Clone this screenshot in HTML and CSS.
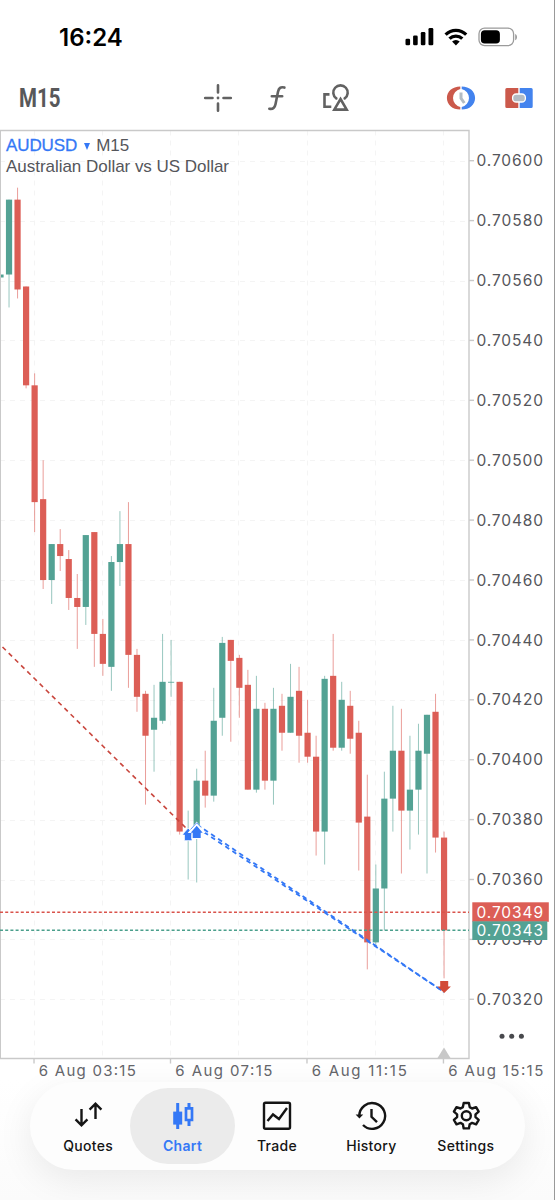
FILE: index.html
```html
<!DOCTYPE html>
<html lang="en">
<head>
    <meta charset="UTF-8">
    <title>AUDUSD M15</title>
    <link rel="stylesheet" href="styles.css">
</head>
<body>
    <div class="phone">
        <div class="status-bar">
            <span class="time">16:24</span>
            <svg class="status-icons" width="114" height="22" viewBox="404 26 114 22">
                <rect x="405.5" y="38.7" width="4.6" height="6.6" rx="1.3"/>
                <rect x="413.1" y="35.5" width="4.6" height="9.8" rx="1.3"/>
                <rect x="420.8" y="31.9" width="4.6" height="13.4" rx="1.3"/>
                <rect x="428.5" y="28" width="4.8" height="17.3" rx="1.3"/>
                <path d="M445.6 34.6a14.6 14.6 0 0 1 20.6 0M449.5 38.7a9.1 9.1 0 0 1 12.8 0" fill="none" stroke="#000" stroke-width="3.2"/>
                <path d="M455.9 45.4l-3.8-3.8a5.4 5.4 0 0 1 7.6 0z"/>
                <rect x="479" y="28.1" width="34.6" height="17.6" rx="5.6" fill="none" stroke="#9b9b9b" stroke-width="1.3"/>
                <rect x="480.9" y="30.2" width="19" height="13.4" rx="3.8"/>
                <path d="M515.2 34c2.4 1 2.4 5.2 0 6.2z" fill="#9b9b9b"/>
            </svg>
        </div>

        <div class="toolbar">
            <span class="timeframe">M15</span>
            <div class="tools">
                <svg width="30" height="30" viewBox="0 0 30 30">
                    <path d="M15 2.200v7.300M15 20.500v7.300M2.200 15h7.300M20.500 15h7.300" class="tool-line"/>
                    <circle cx="15" cy="15" r="1.4" fill="#626262"/>
                </svg>
                <svg width="30" height="30" viewBox="0 0 30 30">
                    <path d="M22.400 4.600c-3.800-1.200-5.600.5-6.400 4.200l-2.500 12.400c-.8 3.800-2.400 5.300-6.200 4.600M9.800 13.200h10.400" class="tool-line"/>
                </svg>
                <svg width="30" height="30" viewBox="0 0 30 30">
                    <path d="M8.500 11.400H3.500v12.300h6.800" class="tool-line square"/>
                    <path d="M15.300 15.400a7.200 7.200 0 1 1 8.400 0" class="tool-line"/>
                    <path d="M19.500 16l6.200 10.600H13.300z" class="tool-line square"/>
                </svg>
            </div>
            <div class="modes">
                <svg width="30" height="26" viewBox="0 0 30 26">
                    <path d="M14.300 1.400C6.300 1.400.9 6.500.9 13s5.400 11.600 13.400 11.600v-2.600a9.200 9.200 0 0 1 0-18z" fill="#cb594b"/>
                    <path d="M15.700 1.400C23.700 1.400 29.100 6.500 29.100 13s-5.400 11.600-13.400 11.600v-2.600a9.200 9.200 0 0 0 0-18z" fill="#4383ee"/>
                    <path d="M15 7.500v5.800l3.300 4.700" fill="none" stroke="#b3bcc4" stroke-width="3"/>
                </svg>
                <svg width="30" height="26" viewBox="0 0 30 26">
                    <path d="M2.800 3h11.500v20H2.800a1.500 1.500 0 0 1-1.500-1.500v-17A1.500 1.500 0 0 1 2.800 3z" fill="#cb594b"/>
                    <path d="M15.700 3h11.500a1.500 1.500 0 0 1 1.500 1.500v17a1.500 1.500 0 0 1-1.500 1.500H15.700z" fill="#4383ee"/>
                    <rect x="8.600" y="9" width="12.800" height="8" rx="3.600" fill="#b3bcc4" stroke="#fff" stroke-width="1.300"/>
                </svg>
            </div>
        </div>

        <div class="chart-area">
            <svg id="chart" width="554" height="960" viewBox="0 126 554 960"></svg>
            <div class="chart-title">
                <div><span class="symbol">AUDUSD</span><span class="arrow"></span><span>M15</span></div>
                <div class="description">Australian Dollar vs US Dollar</div>
            </div>
        </div>

        <nav class="tabs">
            <a class="tab">
                <svg width="32" height="32" viewBox="0 0 32 32">
                    <path d="M9.500 9v16M3.600 19.400l5.900 6 5.900-6M23.500 19V3.600M17.600 9.600l5.900-6 5.900 6"/>
                </svg>
                <span>Quotes</span>
            </a>
            <a class="tab active">
                <svg width="32" height="32" viewBox="0 0 32 32">
                    <path d="M10.700 3v26M22 3v5M22 20v6" stroke-width="3"/>
                    <path d="M6.200 11.600h9v13h-9z" fill="currentColor" stroke="none"/>
                    <path d="M19 8.400h6v11.600h-6z" stroke-width="2.700"/>
                </svg>
                <span>Chart</span>
            </a>
            <a class="tab">
                <svg width="32" height="32" viewBox="0 0 32 32">
                    <rect x="3" y="2.800" width="26" height="26" rx="1.500"/>
                    <path d="M6.500 21l5.500-6.500 6 4.500 8-11"/>
                </svg>
                <span>Trade</span>
            </a>
            <a class="tab">
                <svg width="32" height="32" viewBox="0 0 32 32">
                    <path d="M4.300 16A12.900 12.900 0 1 1 8 25M16.500 9v7.800l5.500 5.400"/>
                    <path d="M.6 14.400h7.600l-3.800 4.200z" fill="currentColor" stroke="none"/>
                </svg>
                <span>History</span>
            </a>
            <a class="tab">
                <svg width="32" height="32" viewBox="0 0 32 32">
                    <path d="M13.700 3h5.200l.8 4.100 2.400 1.400 4-1.400 2.600 4.500-3.200 2.700v2.800l3.200 2.700-2.600 4.500-4-1.400-2.400 1.400-.8 4.100h-5.200l-.8-4.100-2.400-1.400-4 1.400-2.600-4.500 3.200-2.700v-2.800l-3.200-2.700 2.600-4.500 4 1.400 2.400-1.400z" stroke-linejoin="round"/>
                    <circle cx="16.300" cy="15.700" r="4.500"/>
                </svg>
                <span>Settings</span>
            </a>
        </nav>
    </div>

    <script src="chart.js"></script>
</body>
</html>
```

FILE: styles.css
```css
* {
    box-sizing: border-box;
}

body {
    margin: 0;
    background-color: #fff;
    font-family: Inter, sans-serif;
}

.phone {
    width: 555px;
    height: 1200px;
    overflow: hidden;
    border-right: 1px solid #999;
    background: linear-gradient(#fff 1080px, #fbfbfb);
}

/* Status bar */
.status-bar {
    display: flex;
    justify-content: space-between;
    height: 71px;
    padding: 26px 36px 0 59px;
}

.time {
    font-size: 24px;
    font-weight: 600;
    line-height: 24px;
    letter-spacing: 0;
}

/* Toolbar */
.toolbar {
    display: flex;
    align-items: center;
    height: 55px;
    padding: 0 0 1px 19px;
}

.timeframe {
    width: 184px;
    font-family: Roboto, sans-serif;
    font-size: 25px;
    font-weight: 700;
    color: #58585a;
    transform: scaleX(0.82);
    transform-origin: left;
}

.tools {
    display: flex;
    gap: 29px;
}

.tool-line {
    fill: none;
    stroke: #626262;
    stroke-width: 2.6;
    stroke-linecap: round;
}

.tool-line.square {
    stroke-linecap: butt;
}

.modes {
    display: flex;
    gap: 28px;
    margin-left: 95px;
}

/* Chart */
.chart-area {
    position: relative;
    height: 956px;
}

#chart {
    display: block;
}

.chart-title {
    position: absolute;
    top: 9px;
    left: 6px;
    font-family: "Liberation Sans", Arial, sans-serif;
    font-size: 17px;
    line-height: 21px;
    color: #55565b;
}

.symbol {
    letter-spacing: -0.1px;
    color: #3478f6;
    -webkit-text-stroke: 0.3px #3478f6;
}

.arrow {
    display: inline-block;
    margin: 0 6px 1px 7px;
    border-top: 7px solid #3478f6;
    border-left: 3.5px solid transparent;
    border-right: 3.5px solid transparent;
}

.description {
    letter-spacing: -0.03px;
}

.grid {
    stroke: #f4f4f4;
    stroke-dasharray: 5 5;
}

.frame {
    fill: none;
    stroke: #c9c9c9;
    stroke-width: 1.4;
}

.up {
    fill: #53a294;
}

.down {
    fill: #dc5e56;
}

.wick {
    opacity: 0.6;
}

.axis-label {
    font-size: 15.5px;
    fill: #55565b;
}

.axis-label.light {
    fill: #fff;
}

.time-label {
    font-size: 15px;
    fill: #65666b;
}

/* Bottom tabs */
.tabs {
    position: relative;
    display: grid;
    grid-template-columns: repeat(5, 1fr);
    width: 495px;
    height: 88px;
    margin-left: 30px;
    padding: 6px 12px 6px 11px;
    border-radius: 44px;
    background-color: #fdfdfd;
    box-shadow: 0 10px 36px rgba(0, 0, 0, 0.08);
}

.tab {
    display: flex;
    flex-direction: column;
    align-items: center;
    padding-top: 12px;
    font-size: 14px;
    font-weight: 500;
    line-height: 18px;
    letter-spacing: 0.3px;
    color: #151515;
}

.tab svg {
    margin-bottom: 5px;
    fill: none;
    stroke: currentColor;
    stroke-width: 2.4;
}

.tab.active {
    margin: 0 -5px;
    border-radius: 38px;
    background-color: #ebebeb;
    font-weight: 600;
    color: #3478f6;
}
```

FILE: chart.js
```js
// [open, high, low, close] in points above 0.70000
const candles = [
    [561, 562, 561, 562],
    [562, 587, 551, 587], [587, 591, 554, 557], [558, 558, 524, 525], [525, 529, 476, 486],
    [487, 500, 457, 460], [460, 472, 452, 472], [472, 477, 463, 468], [467, 470, 450, 454],
    [454, 462, 437, 451], [451, 475, 445, 475], [476, 476, 431, 442], [442, 447, 428, 432],
    [431, 468, 423, 466], [466, 483, 458, 472], [472, 486, 424, 435], [435, 437, 416, 421],
    [422, 423, 385, 408], [410, 425, 396, 414], [413, 442, 412, 426], [426, 440, 421, 426],
    [426, 426, 375, 376], [376, 383, 360, 376], [377, 397, 359, 393], [393, 403, 384, 388],
    [388, 424, 386, 413], [414, 441, 408, 439], [440, 440, 406, 433], [434, 435, 414, 424],
    [425, 430, 390, 390], [390, 428, 389, 417], [417, 419, 390, 393], [393, 424, 385, 417],
    [418, 422, 403, 409], [409, 432, 409, 421], [423, 431, 399, 408], [409, 420, 399, 401],
    [401, 408, 368, 376], [376, 428, 365, 427], [428, 442, 403, 404], [404, 426, 403, 420],
    [418, 423, 402, 407], [409, 413, 363, 379], [381, 395, 330, 339], [339, 365, 338, 357],
    [357, 396, 343, 387], [387, 418, 376, 403], [403, 417, 362, 383], [383, 408, 370, 390],
    [390, 412, 375, 403], [402, 415, 362, 415], [416, 422, 369, 374], [374, 376, 327, 343]
];

const RIGHT = 469;
const TOP = 130.5;
const BOTTOM = 1058.5;
const STEP = 8.53;

const xOf = i => 0.5 + i * STEP;
const yOf = points => 160.7 + (600 - points) * 2.995;
const chart = document.getElementById('chart');
let out = '';

function line(x1, y1, x2, y2, attrs) {
    out += `<line x1="${x1}" y1="${y1}" x2="${x2}" y2="${y2}" ${attrs}/>`;
}

function text(x, y, value, width, cls) {
    out += `<text x="${x}" y="${y}" textLength="${width}" class="${cls}">${value}</text>`;
}

// Grid and price scale
for (let p = 600; p >= 320; p -= 20) {
    const y = yOf(p);
    line(0, Math.round(y) + 0.5, RIGHT, Math.round(y) + 0.5, 'class="grid"');
    line(RIGHT, y, RIGHT + 5, y, 'class="frame"');
    text(476.5, y + 5.6, '0.70' + p, 66.500, 'axis-label');
}
for (let i = 4; i < candles.length; i += 8) {
    const x = Math.round(xOf(i)) - 0.5;
    line(x, TOP, x, BOTTOM, 'class="grid"');
}

// Time scale
['03:15', '07:15', '11:15', '15:15'].forEach((time, n) => {
    const x = xOf(4 + n * 16) - 0.6;
    line(x, BOTTOM, x, BOTTOM + 5, 'class="frame"');
    text(x + 4.8, 1076.4, '6 Aug ' + time, 97 - (n > 1 ? 2 : 0), 'time-label');
});

// Candles
candles.forEach(([open, high, low, close], i) => {
    const x = xOf(i);
    const cls = close >= open ? 'up' : 'down';
    const top = yOf(Math.max(open, close));
    const height = Math.max(yOf(Math.min(open, close)) - top, 0.8);
    out += `<rect x="${x - 0.5}" y="${yOf(high)}" width="1" height="${yOf(low) - yOf(high)}" class="wick ${cls}"/>`;
    out += `<rect x="${x - 3.1}" y="${top}" width="6.2" height="${height}" class="${cls}"/>`;
});

// Frame
out += `<path d="M0.300 ${BOTTOM}V${TOP}H${RIGHT}V${BOTTOM}H0" class="frame"/>`;
out += '<path d="M437.500 1058l6.500-10.500 6.500 10.500z" fill="#c8c8c8"/>';

// Ask and bid
line(0, 912.3, RIGHT, 912.3, 'stroke="#d9534b" stroke-width="1.4" stroke-dasharray="3 2.200"');
line(0, 930.3, RIGHT, 930.3, 'stroke="#4a9f8c" stroke-width="1.4" stroke-dasharray="3 2.200"');
out += '<rect x="472.300" y="902.300" width="76.500" height="19.500" class="down"/>';
out += '<rect x="472.300" y="921.300" width="75" height="18.700" class="up"/>';
text(476.5, 917.8, '0.70349', 66.500, 'axis-label light');
text(476.5, 935.8, '0.70343', 66.500, 'axis-label light');

// Trades
line(2.5, 647, 188, 830, 'stroke="#c9463d" stroke-width="1.6" stroke-dasharray="4.700 4"');
line(197, 824.5, 444, 992, 'stroke="#3478f6" stroke-width="1.8" stroke-dasharray="4.700 3.800"');
line(197, 827.5, 444, 992, 'stroke="#3478f6" stroke-width="1.8" stroke-dasharray="4.700 3.800"');
out += '<path d="M188.200 828l5.600 6.500h-1.800v6.200h-7.600v-5.700h-2.400z" fill="#3478f6" stroke="#fff" stroke-width="0.800"/>';
out += '<path d="M196.700 821.500l9 11.500h-3.700v6h-10.600v-6h-3.700z" fill="#fff"/>';
out += '<path d="M196.700 825.700l6 7.100h-2v5.200h-8v-5.200h-2z" fill="#3478f6"/>';
out += '<path d="M190.500 829.500l6.200-6.700 4.500 4.700" fill="none" stroke="#3478f6" stroke-width="0.800"/>';
out += '<path d="M444.200 993l-6.700-6.500h2.700v-5.500h8v5.500h2.700z" fill="#d24a37"/>';

// More button
[502, 511.7, 521.4].forEach(x => {
    out += `<circle cx="${x}" cy="1036.300" r="2.500" fill="#48494d"/>`;
});

chart.innerHTML = out;
```
